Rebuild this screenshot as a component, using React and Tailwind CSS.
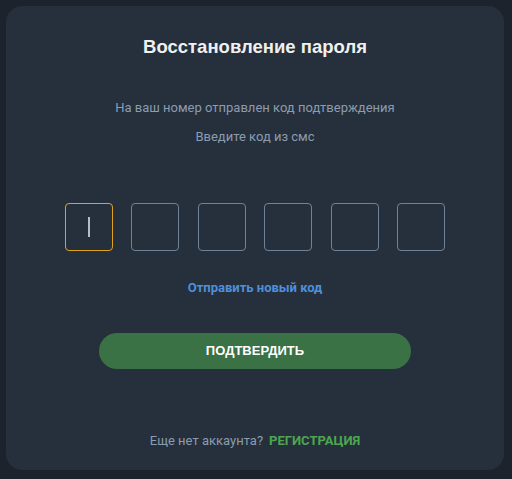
export default function App() {
  const boxes = [0, 1, 2, 3, 4, 5];
  return (
    <div className="w-[512px] h-[479px] bg-[#1d232c] pt-[6px] pl-[6px] font-['Roboto',sans-serif]">
      <div className="w-[498px] h-[464px] bg-[#25303c] rounded-[16px] flex flex-col items-center">
        <h1 className="mt-[30px] text-[18.5px] leading-[22px] font-bold text-[#f0f0f0] font-['Liberation_Sans',Arial,sans-serif]">
          Восстановление пароля
        </h1>
        <p className="mt-[42px] text-[13px] leading-[16px] text-[#8c9cb0]">На ваш номер отправлен код подтверждения</p>
        <p className="mt-[13px] text-[13px] leading-[16px] text-[#8c9cb0]">Введите код из смс</p>
        <div className="mt-[58px] flex gap-[18.4px]">
          {boxes.map((i) => (
            <div
              key={i}
              className={
                i === 0
                  ? "w-[48px] h-[48px] rounded-[4px] border-[1.5px] border-[#e0a11b] flex items-center justify-center"
                  : "w-[48px] h-[48px] rounded-[4px] border-[1.5px] border-[#6e8397]"
              }
            >
              {i === 0 && <div className="w-[2px] h-[20px] bg-[#b8bcc6]" />}
            </div>
          ))}
        </div>
        <button className="mt-[29px] text-[13px] leading-[16px] font-bold text-[#4f8fdb]">Отправить новый код</button>
        <button className="mt-[37px] w-[312px] h-[36px] rounded-full bg-[#3a7145] text-white text-[13px] font-bold font-['Liberation_Sans',Arial,sans-serif]">
          ПОДТВЕРДИТЬ
        </button>
        <div className="mt-[64px] text-[13px] leading-[16px] flex gap-[6px]">
          <span className="text-[#8c9cb0]">Еще нет аккаунта?</span>
          <span className="text-[#4ea54f] font-bold">РЕГИСТРАЦИЯ</span>
        </div>
      </div>
    </div>
  );
}
